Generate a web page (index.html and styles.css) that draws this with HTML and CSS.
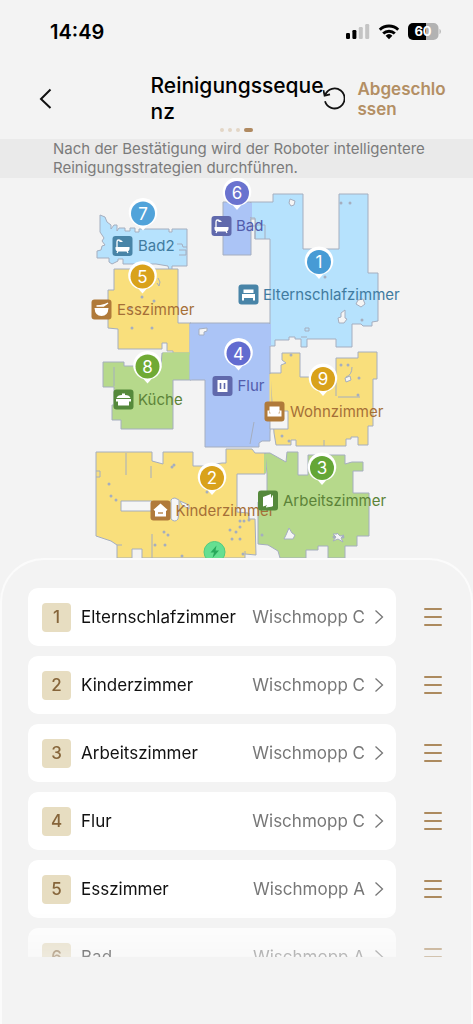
FILE: index.html
```html
<!DOCTYPE html>
<html lang="de">
<head>
<meta charset="utf-8">
<meta name="viewport" content="width=device-width, initial-scale=1">
<title>Reinigungssequenz</title>
<link rel="stylesheet" href="styles.css">
</head>
<body>
<div class="app">
  <div class="status">
    <span class="time">14:49</span>
    <svg class="status-icons" width="98" height="20" viewBox="345 22 98 20" aria-hidden="true">
      <rect x="346" y="33" width="4" height="6" rx="1.2"/>
      <rect x="352.4" y="30" width="4" height="9" rx="1.2"/>
      <rect x="358.8" y="27" width="4" height="12" rx="1.2" fill="#c4c4c4"/>
      <rect x="365.2" y="24" width="4" height="15" rx="1.2" fill="#c4c4c4"/>
      <g fill="none" stroke="#000" stroke-width="2.9">
        <path d="M379.8 29.8a13.2 13.2 0 0 1 18.4 0"/>
        <path d="M383.2 33.5a8.4 8.4 0 0 1 11.6 0"/>
      </g>
      <path d="M385.6 35.7a5 5 0 0 1 6.8 0L389 39.2z"/>
      <path d="M413 23h13v17h-13a5 5 0 0 1-5-5v-7a5 5 0 0 1 5-5z"/>
      <path d="M426 23h7.500a5 5 0 0 1 5 5v7a5 5 0 0 1-5 5H426z" fill="#b2b2b2"/>
      <path d="M439.500 29v5c1.800-.6 1.800-4.400 0-5z" fill="#b2b2b2"/>
      <text class="battery" x="423" y="36" text-anchor="middle">60</text>
    </svg>
  </div>

  <header class="header">
    <button class="icon-btn back" type="button" aria-label="Zurück">
      <svg width="14" height="22" viewBox="0 0 14 22"><path d="M12.500 1.500 3 11l9.500 9" fill="none" stroke="#111" stroke-width="2"/></svg>
    </button>
    <h1 class="title">Reinigungsseque<wbr>nz</h1>
    <div class="actions">
      <button class="icon-btn" type="button" aria-label="Zurücksetzen">
        <svg width="22" height="24" viewBox="0 0 22 24"><path d="M2.200 8A10 10 0 1 1 2 14.300" fill="none" stroke="#111" stroke-width="1.800"/><path d="M.4 3.200 1.600 8.700 7 7.300" fill="none" stroke="#111" stroke-width="1.800"/></svg>
      </button>
      <button class="done" type="button">Abgeschlo<wbr>ssen</button>
    </div>
    <div class="dots"><i></i><i></i><i></i><i class="active"></i></div>
  </header>

  <p class="notice">Nach der Bestätigung wird der Roboter intelligentere Reinigungsstrategien durchführen.</p>

  <svg class="map" viewBox="0 178 473 380" role="img" aria-label="Karte der Räume">
    <defs>
      <path id="pin" d="M-4 12.500A14.300 14.300 0 1 1 4 12.500L0 17z"/>
      <g id="tub"><path d="M-7 1H7v1.500Q7 5.500 4 5.500H-4Q-7 5.500-7 2.500z"/><path d="M-4.500 5-5.500 7M4.500 5l1 2M-5.500 1v-5.200q0-1.800 1.800-1.800 1.500 0 1.700 1.500" fill="none" stroke="#fff" stroke-width="1.300"/><path d="M-3.500-4h4l-2-2z"/></g>
    </defs>
    <g class="rooms">
      <path class="sky" d="M100 215l5 2 2 5 4 3v4l3-4h3v6l2-3h6v3h5v-3h5v4h4v-3h30v3h3v-3h15v37h-15v4h-3l-1-4-12-2h-33v-5h-5v2l-6 3-3-2v-4H97v-7l4-1 1-4 3-1-3-4 2-3-4-6z"/>
      <path class="yellow" d="M114 269h64v54h13v31h-18v-3h-6v-8h-5v6h-44v-20l-10-1v-38h6z"/>
      <path class="green" d="M162 353h29v27h-18v49h-52v-9h-9v-15h2v-18h-11v-25h21v4h37z"/>
      <path class="blue" d="M223 202h28v53h-28z"/>
      <path class="blue" d="M190 323h80v50l2 10-2 50v8h-8l-3 2v4h-54v-67h-15z"/>
      <path class="sky" d="M251 202h22v-8h30v55h36v-55h29v79h10v48l-6 1v4h-9l-2-2h-9v23h-16v-8h-29v8h-6v-8h-6v-2h-6v3h-14v6h-5V239h-15v-21h-4z"/>
      <path class="yellow" d="M270 373h11v-8l5-2-4-3v-7h18v24h36v-19h22v-6h19v27h-4v47h-5v19h-10v-8h-7v2h-5v7h-50v-6h-5v5h-15l-2-12z"/>
      <path class="yellow" d="M96 452h56v9l11 3v-12h30v14h10l19-3h4v-14h26l3 4h10v21h-28v38l11 1 1 6h6l1 36-11-1v4H142v-9h-10v9h-15v-13l-6-4-15-5z"/>
      <path class="green" d="M265 453h5l16 9 1-10h11v23h10v-20h37v9l7-2h11v9h-10v22h16v43h-12v10h-12v12h-17v-12h-10v4h-12v8h-26l-2-7-10-6-10-1v-42l9-4v-24z"/>
    </g>
    <g class="seams">
      <path stroke="#abc4f6" d="M190.500 324v55.500M270 324v22M251 203v14"/>
      <path stroke="#b6d98b" d="M163 353.500h27M265 454v19"/>
      <path stroke="#f9df7c" d="M270.500 374v36"/>
    </g>
    <g class="holes">
      <path d="M121 501h31v10h-31zM171 500q1-2 4-2l4 2v12l-1 7q-3 4-7 0zM270 411h18v18h-18zM199 329l8-1v3l-3 1v3h-5zM180 501l9 4v4l-7-4z"/>
      <path d="M290 199l5 2-1 4-3 1-2-3zM341 313l4-3v8l2 1-3 4h-5l-1-5 3-1zM358 300l5-1 2 5-4 3-5-3zM289 528l3 5 3 2-2 4h-9l2-4zM337 533l3 3 4-1-3 3 2 4-5-3-5 2 3-4-3-3h4zM345 378l5-2 1 4-5 2zM251 219h4v7h-4z"/>
    </g>
    <g class="marks">
      <path d="M255 239v-8l2-6h8v14M126 453v22M114 367v19M151 466v12M152 534v24M157 207M254 422l-4 22M338 397h22M336 377v19M352 367q0 8-6 10M324 440v6M249 513v6M150 246M177 244h5l1 3h4m-8 3h7v5h-7M158 278l2 4-1 4-2-3M305 328h4v3h-4zM301 337h6M96 471h4v6h-4M117 545h5M245 554v-3"/>
      <g class="specks">
        <path d="M142 297h0M154 301h0M132 328h0M152 328h0M130 308h0M341 203h0M350 203h0M325 277h0M362 320h0M341 365h0M348 365h0M359 378h0M358 395h0M282 436h0M289 441h0M109 484h0M111 496h0M116 500h0M174 465h0M172 467h0M207 492h0M164 532h0M168 535h0M165 545h0M155 545h0M182 556h0M240 521h0M244 521h0M249 520h0M240 527h0M230 530h0M236 532h0M232 539h0M240 539h0M243 554h0M262 535h0M334 537h0M343 537h0M291 355h0"/>
      </g>
    </g>
    <circle cx="214.500" cy="552" r="10.500" fill="#66df91" stroke="#51cb7f" stroke-width="1"/>
    <path d="M216.500 545.500l-6 7h3.500l-1.500 5.500 6.500-7.500h-3.500z" fill="#28a95b"/>

    <g class="label" transform="translate(122.500 246)"><rect class="c-teal" x="-10" y="-10" width="20" height="20" rx="3"/><use href="#tub"/><text class="t-teal" x="15.500" y="5">Bad2</text></g>
    <g class="label" transform="translate(101.500 309.500)"><rect class="c-brown" x="-10" y="-10" width="20" height="20" rx="3"/><path d="M-7-1.500H7Q6.500 6.500 0 6.500T-7-1.500z"/><path d="M-5-3.500H2L6.500-6.500" fill="none" stroke="#fff" stroke-width="1.500"/><text class="t-brown" x="15.500" y="5">Esszimmer</text></g>
    <g class="label" transform="translate(221.500 226)"><rect class="c-indigo" x="-10" y="-10" width="20" height="20" rx="3"/><use href="#tub"/><text class="t-indigo" x="14.500" y="5">Bad</text></g>
    <g class="label" transform="translate(248.500 294.500)"><rect class="c-teal" x="-10" y="-10" width="20" height="20" rx="3"/><path d="M-5-1.500V-5h10v3.500zM-6.500-.5h13v4h-13zM-6.500 3h2v3h-2zM4.500 3h2v3h-2z"/><text class="t-teal" x="14.500" y="5">Elternschlafzimmer</text></g>
    <g class="label" transform="translate(123.500 399.500)"><rect class="c-green" x="-10" y="-10" width="20" height="20" rx="3"/><path d="M-5.500-.5h11V6h-11zM-7-1.500q1-3 5.500-3V-6h3v1.500q4.500 0 5.500 3zM-7.500-.5h2V2h-2zM5.500-.5h2V2h-2z"/><text class="t-green" x="14.500" y="5">Küche</text></g>
    <g class="label" transform="translate(222.500 386)"><rect class="c-indigo" x="-10" y="-10" width="20" height="20" rx="3"/><path d="M-5-6H5V6H-5z"/><path class="c-indigo" d="M-2.800-3h1.600v6h-1.600zM1.200-3h1.600v6H1.200z"/><text class="t-indigo" x="15" y="5">Flur</text></g>
    <g class="label" transform="translate(274.500 411.500)"><rect class="c-brown" x="-10" y="-10" width="20" height="20" rx="3"/><path d="M-5-5H5v4l-1 3h-8l-1-3zM-7-1h2v3H5v-3h2v6H-7z"/><text class="t-brown" x="15.500" y="5">Wohnzimmer</text></g>
    <g class="label" transform="translate(160.500 510.500)"><rect class="c-brown" x="-10" y="-10" width="20" height="20" rx="3"/><path d="M0-7 7-.8 5.500.5V6h-11V.5L-7-.8z"/><path d="M-2.500 2.500h5" stroke="#b07a3a" stroke-width="1.300"/><text class="t-brown" x="15" y="5">Kinderzimmer</text></g>
    <g class="label" transform="translate(268 500.500)"><rect class="c-green" x="-10" y="-10" width="20" height="20" rx="3"/><path d="M-5-3.500 3-6.500V3.500L-5 6z"/><path d="M4.500-5V5.500L-2 6.500" fill="none" stroke="#fff" stroke-width="1"/><text class="t-green" x="15" y="5">Arbeitszimmer</text></g>

    <g class="pin" transform="translate(143 213.500)"><use href="#pin"/><circle r="12" fill="#51a3da"/><text y="6">7</text></g>
    <g class="pin" transform="translate(142.500 276.500)"><use href="#pin"/><circle r="12" fill="#d9a21b"/><text y="6">5</text></g>
    <g class="pin" transform="translate(237 193)"><use href="#pin"/><circle r="12" fill="#6a73cf"/><text y="6">6</text></g>
    <g class="pin" transform="translate(319 262)"><use href="#pin"/><circle r="12" fill="#479bd5"/><text y="6">1</text></g>
    <g class="pin" transform="translate(147.500 366.500)"><use href="#pin"/><circle r="12" fill="#70aa35"/><text y="6">8</text></g>
    <g class="pin" transform="translate(238.500 353.500)"><use href="#pin"/><circle r="12" fill="#626bd0"/><text y="6">4</text></g>
    <g class="pin" transform="translate(323 379)"><use href="#pin"/><circle r="12" fill="#d9a21b"/><text y="6">9</text></g>
    <g class="pin" transform="translate(212 478)"><use href="#pin"/><circle r="12" fill="#d9a21b"/><text y="6">2</text></g>
    <g class="pin" transform="translate(322 468)"><use href="#pin"/><circle r="12" fill="#64a636"/><text y="6">3</text></g>
  </svg>

  <main class="sheet">
    <ol class="list">
      <li class="row"><button class="card" type="button"><span class="num">1</span><span class="name">Elternschlafzimmer</span><span class="mop">Wischmopp C</span><svg class="chev" width="10" height="16" viewBox="0 0 10 16"><path d="M1.500 1.500 8.500 8l-7 6.500"/></svg></button><button class="handle" type="button" aria-label="Verschieben"><i></i><i></i><i></i></button></li>
      <li class="row"><button class="card" type="button"><span class="num">2</span><span class="name">Kinderzimmer</span><span class="mop">Wischmopp C</span><svg class="chev" width="10" height="16" viewBox="0 0 10 16"><path d="M1.500 1.500 8.500 8l-7 6.500"/></svg></button><button class="handle" type="button" aria-label="Verschieben"><i></i><i></i><i></i></button></li>
      <li class="row"><button class="card" type="button"><span class="num">3</span><span class="name">Arbeitszimmer</span><span class="mop">Wischmopp C</span><svg class="chev" width="10" height="16" viewBox="0 0 10 16"><path d="M1.500 1.500 8.500 8l-7 6.500"/></svg></button><button class="handle" type="button" aria-label="Verschieben"><i></i><i></i><i></i></button></li>
      <li class="row"><button class="card" type="button"><span class="num">4</span><span class="name">Flur</span><span class="mop">Wischmopp C</span><svg class="chev" width="10" height="16" viewBox="0 0 10 16"><path d="M1.500 1.500 8.500 8l-7 6.500"/></svg></button><button class="handle" type="button" aria-label="Verschieben"><i></i><i></i><i></i></button></li>
      <li class="row"><button class="card" type="button"><span class="num">5</span><span class="name">Esszimmer</span><span class="mop">Wischmopp A</span><svg class="chev" width="10" height="16" viewBox="0 0 10 16"><path d="M1.500 1.500 8.500 8l-7 6.500"/></svg></button><button class="handle" type="button" aria-label="Verschieben"><i></i><i></i><i></i></button></li>
      <li class="row"><button class="card" type="button"><span class="num">6</span><span class="name">Bad</span><span class="mop">Wischmopp A</span><svg class="chev" width="10" height="16" viewBox="0 0 10 16"><path d="M1.500 1.500 8.500 8l-7 6.500"/></svg></button><button class="handle" type="button" aria-label="Verschieben"><i></i><i></i><i></i></button></li>
    </ol>
  </main>
</div>
</body>
</html>
```

FILE: styles.css
```css
* { box-sizing: border-box; }
body { margin: 0; background: #f3f3f3; color: #111; font-family: Inter, "Liberation Sans", sans-serif; }
button { border: 0; padding: 0; background: none; font: inherit; color: inherit; text-align: left; cursor: pointer; }
svg { display: block; }

.app { display: flex; flex-direction: column; height: 100vh; overflow: hidden; }

.status { display: flex; justify-content: space-between; align-items: center; padding: 20px 30px 0 50px; height: 44px; flex: none; }
.time { font-size: 20px; font-weight: 600; color: #000; }
.battery { font-size: 13px; font-weight: 700; fill: #fff; }

.header { display: grid; grid-template-columns: 1fr minmax(0, 172px) 1fr; align-items: center; row-gap: 3px; padding: 29px 0 7px; flex: none; }
.icon-btn { flex: none; }
.back { margin-left: 38px; justify-self: start; }
.title { margin: 0; font-size: 21px; line-height: 26px; font-weight: 500; color: #000; }
.actions { display: flex; align-items: center; gap: 13px; padding-right: 24px; }
.done { min-width: 0; font-size: 17px; line-height: 20px; font-weight: 600; color: #b38f64; }
.dots { grid-column: 1 / -1; display: flex; justify-content: center; gap: 4px; }
.dots i { width: 4px; height: 4px; border-radius: 2px; background: #e3d6c6; }
.dots .active { width: 9px; background: #b08a61; }

.notice { margin: 0; padding: 0 30px 1px 53px; flex: none; background: #eaeaea; color: #7b7b7b; font-size: 15px; line-height: 19px; }

.map { width: 100%; height: auto; flex: none; }
.rooms path { stroke: #a5aebf; stroke-width: 1; stroke-linejoin: miter; }
.seams path { fill: none; stroke-width: 2; }
.sky { fill: #b6e2fd; }
.blue { fill: #abc4f6; }
.yellow { fill: #f9df7c; }
.green { fill: #b6d98b; }
.holes path { fill: #f5f5f5; stroke: #a5aebf; stroke-width: 1; }
.marks path { fill: none; stroke: #a5aebf; stroke-width: 1; }
.marks .specks path { stroke-width: 3; stroke-linecap: round; }
.label path, .label use { fill: #fff; }
.label .c-teal { fill: #4884a7; }
.label .c-brown { fill: #b07a3a; }
.label .c-indigo { fill: #6069ac; }
.label .c-green { fill: #55893b; }
.label text { font-size: 15px; }
.t-teal { fill: #417ba0; }
.t-brown { fill: #a56f38; }
.t-indigo { fill: #525cac; }
.t-green { fill: #5c8338; }
.pin use { fill: #fff; }
.pin text { fill: #fff; font-size: 17px; text-anchor: middle; }

.sheet { flex: 1; min-height: 0; display: flex; padding: 28px 0 67px; border: 2px solid #fbfbfb; border-bottom: 0; border-radius: 44px 44px 0 0; }
.list { flex: 1; margin: 0; padding: 0 29px 0 26px; list-style: none; display: flex; flex-direction: column; gap: 10px; overflow: hidden; -webkit-mask-image: linear-gradient(#000 calc(100% - 50px), rgba(0, 0, 0, .45)); mask-image: linear-gradient(#000 calc(100% - 50px), rgba(0, 0, 0, .45)); }
.row { display: flex; align-items: center; gap: 28px; flex: none; }
.card { flex: 1; min-width: 0; display: flex; align-items: center; height: 58px; padding: 0 12px 0 14px; border-radius: 10px; background: #fff; }
.num { width: 29px; height: 29px; border-radius: 4px; background: #e7ddc1; color: #86653a; font-size: 17px; font-weight: 500; line-height: 29px; text-align: center; }
.name { flex: 1; margin-left: 10px; font-size: 17px; color: #111; }
.mop { margin-right: 9px; font-size: 17px; color: #777; }
.chev path { fill: none; stroke: #777; stroke-width: 1.3; }
.handle { display: flex; flex-direction: column; gap: 6px; width: 18px; }
.handle i { height: 2px; border-radius: 1px; background: #ac8a5e; }
```
